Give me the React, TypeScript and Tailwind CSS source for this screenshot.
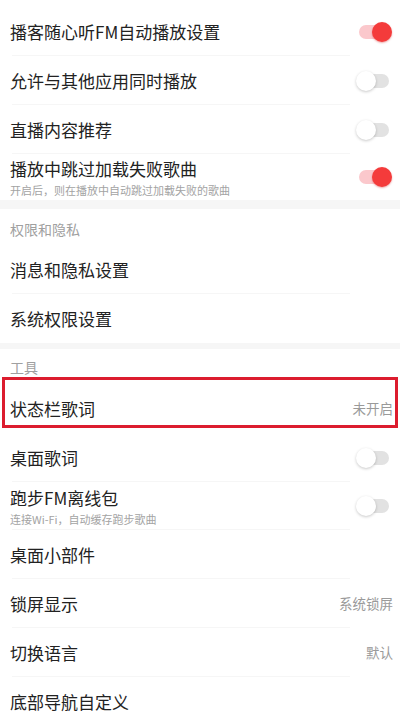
import React from "react";

const font = { fontFamily: '"Noto Sans CJK SC", "Noto Sans", sans-serif' };

function Toggle({ on }: { on: boolean }) {
  return (
    <div className="relative w-[36px] h-[20px] shrink-0 mr-[1px]">
      <div
        className={
          "absolute left-[3px] right-[3px] top-[3px] h-[14px] rounded-full " +
          (on ? "bg-[#fbc8cc]" : "bg-[#e2e2e2]")
        }
      />
      {on ? (
        <div className="absolute right-0 top-0 w-[20px] h-[20px] rounded-full bg-[#f43b3b] shadow-[0_1px_2px_rgba(200,0,0,0.35)]" />
      ) : (
        <div className="absolute left-0 top-0 w-[20px] h-[20px] rounded-full bg-white shadow-[0_1px_3px_rgba(0,0,0,0.22)]" />
      )}
    </div>
  );
}

function Row({
  title,
  sub,
  right,
  toggle,
  h = "h-[49px]",
  divider = true,
  children,
}: {
  title: string;
  sub?: string;
  right?: string;
  toggle?: boolean;
  h?: string;
  divider?: boolean;
  children?: React.ReactNode;
}) {
  return (
    <div className={"relative flex items-center pl-[10px] pr-[7px] " + h}>
      <div className="flex-1 flex flex-col">
        <div className="text-[17px] leading-[22px] text-[#222222]">{title}</div>
        {sub && (
          <div className="text-[11px] leading-[14px] text-[#a3a3a3] mt-[3px]">{sub}</div>
        )}
      </div>
      {right && <div className="text-[13.5px] text-[#9a9a9a]">{right}</div>}
      {toggle !== undefined && <Toggle on={toggle} />}
      {divider && (
        <div className="absolute left-[12px] right-[50px] bottom-0 h-px bg-[#f6f6f6]" />
      )}
      {children}
    </div>
  );
}

function Header({ text, h }: { text: string; h: string }) {
  return (
    <div className={"flex items-center pl-[10px] text-[14px] text-[#a0a0a0] " + h}>{text}</div>
  );
}

export default function App() {
  return (
    <div className="w-[400px] h-[713px] overflow-hidden bg-white" style={font}>
      <div className="pt-[7px]">
        <Row title="播客随心听FM自动播放设置" toggle={true} />
        <Row title="允许与其他应用同时播放" toggle={false} />
        <Row title="直播内容推荐" toggle={false} />
        <Row
          title="播放中跳过加载失败歌曲"
          sub="开启后，则在播放中自动跳过加载失败的歌曲"
          toggle={true}
          h="h-[46px]"
          divider={false}
        />
        <div className="h-[9px] bg-[#f6f6f6]" />
        <Header text="权限和隐私" h="h-[36px] pt-[4px]" />
        <Row title="消息和隐私设置" />
        <Row title="系统权限设置" divider={false} />
        <div className="h-[6px] bg-[#f6f6f6]" />
        <Header text="工具" h="h-[35px] pt-[2px]" />
        <Row title="状态栏歌词" right="未开启" divider={false}>
          <div className="absolute left-[2px] right-[2px] top-[-7px] h-[51px] border-[3px] border-[#dc1c2e]" />
        </Row>
        <Row title="桌面歌词" toggle={false} />
        <Row
          title="跑步FM离线包"
          sub="连接Wi-Fi，自动缓存跑步歌曲"
          toggle={false}
          h="h-[48px]"
        />
        <Row title="桌面小部件" />
        <Row title="锁屏显示" right="系统锁屏" />
        <Row title="切换语言" right="默认" />
        <Row title="底部导航自定义" divider={false} />
      </div>
    </div>
  );
}
